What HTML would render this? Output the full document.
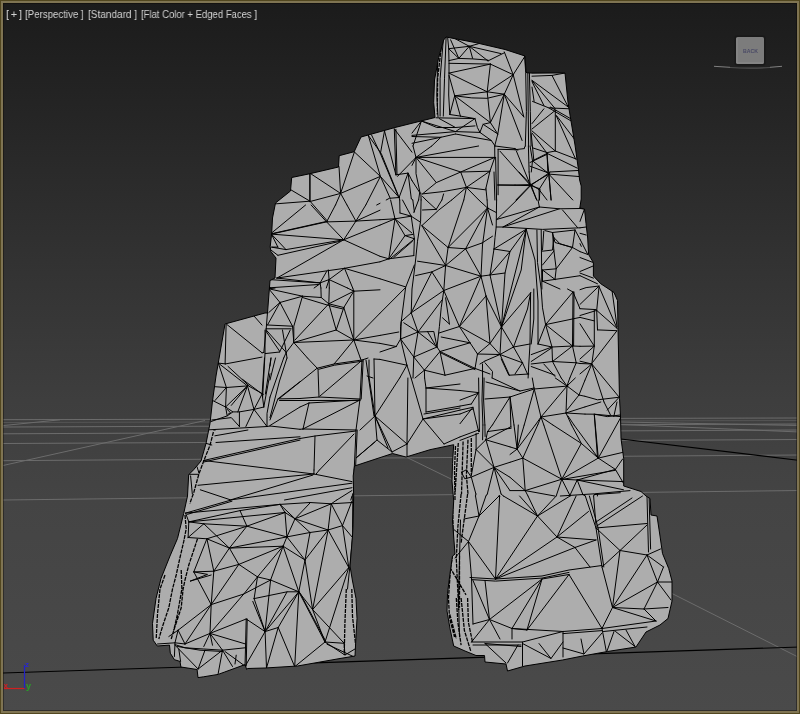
<!DOCTYPE html>
<html>
<head>
<meta charset="utf-8">
<title>Perspective viewport</title>
<style>
html,body{margin:0;padding:0;background:#444;}
body{width:800px;height:714px;overflow:hidden;position:relative;font-family:"Liberation Sans",sans-serif;}
#vp{position:absolute;left:0;top:0;width:800px;height:714px;overflow:hidden;
 background:linear-gradient(to bottom,#1b1b1b 0px,#222222 80px,#313131 250px,#3e3e3e 400px,#444444 500px,#4a4a4a 714px);}
#frame{position:absolute;left:0;top:0;width:794px;height:708px;border:1px solid #52471f;box-shadow:inset 0 0 0 2px #7f7452, inset 0 0 0 3px rgba(10,6,0,0.4);padding:2px;pointer-events:none;}
svg{position:absolute;left:0;top:0;will-change:transform;}
.lbl{position:absolute;top:7px;height:14px;line-height:14px;font-size:11px;color:#d2d2d2;white-space:nowrap;transform-origin:0 50%;will-change:transform;}
</style>
</head>
<body>
<div id="vp">
<svg width="800" height="714" viewBox="0 0 800 714">
 <g id="grid" fill="none" stroke="#6c6c6c" stroke-width="1">
  <path d="M3 419.7L800 418"/>
  <path d="M3 422.5L800 420.5" stroke="#555"/>
  <path d="M3 425.6L60 419.8"/>
  <path d="M3 427L800 424"/>
  <path d="M3 433.8L800 430"/>
  <path d="M3 443.5L800 439.5"/>
  <path d="M3 460.7L800 455"/>
  <path d="M3 500L800 490.5"/>
  <path d="M3 465.5L205 420.5"/>
  <path d="M620 422L800 425.5"/>
  <path d="M620 424.5L800 432"/>
  <path d="M406 457L452.5 479.7"/>
  <path d="M672 593.5L800 658"/>
 </g>
 <g id="axes" fill="none" stroke="#000" stroke-width="1.2">
  <path d="M3 673L800 647"/>
  <path d="M600 436.5L800 460.5"/>
 </g>
 <defs><clipPath id="rc"><path d="M446 37 475 42.5 505 49.5 525 56 526 72.5 529 73 565 73 568 102.5 570 115 575 145 578.5 170 579.6 180 581.2 186 581.2 199 579.8 208 584.5 209 586 223.6 587.7 238 588.6 254.5 593.4 262.6 593.4 276 600.7 283.7 614 292.5 617.5 300.5 618 328 619 376 619.5 398.5 620.5 416 621 438.5 623.7 458.5 623.7 486 641 491.5 646 496 650 498.5 651 515 657 516 660 536 662.5 553.5 668.7 568.5 672 581 672 601 668 618.5 660 625 646 632 636 647 607.5 651.5 582.5 656 562.5 660 525 666 507.5 671 506 664 485 662 484.5 655.5 476 655.5 465 651 453.7 646 450 628.5 447 611 447.5 593.5 450 573.5 452.5 556 455 554 452.5 521 453.7 501 452 481 452.5 463.5 453.7 444.7 430 449.7 406 457 392.5 453.5 354.5 466 353.2 476 353.7 496 353 526 352.5 536 350 566 352.5 581 356 598.5 357 618.5 356 636 355 656 340 658.5 297.5 666 265 668 247.5 668.5 246.7 669.5 245 664.6 224.7 672 218.2 674.4 203.6 676.8 198 677.6 197.1 669.5 180.9 667 180 661.4 174.4 659.7 170.3 653.2 169.5 645.1 157.3 646 153.2 640.2 152.5 623.5 156 598.5 161 578.5 170 556 177.5 538.5 183.7 513.5 187.5 496 188.7 474.7 193.7 469.7 201 461 206 443.5 210 423.5 212.5 401 216 376 220 353 225 324 265 313 267.5 313 270 280.5 275 278 276 258 271 251.7 270.2 246.8 271.7 233 272.5 218 275.5 203 290.5 191 291.7 177.5 310 173.7 338.5 167 339.2 155.7 354.2 151.7 361 137 395 127.5 425 120 435 117.5 433.7 102.5 434.5 80 438.7 57.5 443.7 40Z"/></clipPath></defs>
 <path id="rock" d="M446 37 475 42.5 505 49.5 525 56 526 72.5 529 73 565 73 568 102.5 570 115 575 145 578.5 170 579.6 180 581.2 186 581.2 199 579.8 208 584.5 209 586 223.6 587.7 238 588.6 254.5 593.4 262.6 593.4 276 600.7 283.7 614 292.5 617.5 300.5 618 328 619 376 619.5 398.5 620.5 416 621 438.5 623.7 458.5 623.7 486 641 491.5 646 496 650 498.5 651 515 657 516 660 536 662.5 553.5 668.7 568.5 672 581 672 601 668 618.5 660 625 646 632 636 647 607.5 651.5 582.5 656 562.5 660 525 666 507.5 671 506 664 485 662 484.5 655.5 476 655.5 465 651 453.7 646 450 628.5 447 611 447.5 593.5 450 573.5 452.5 556 455 554 452.5 521 453.7 501 452 481 452.5 463.5 453.7 444.7 430 449.7 406 457 392.5 453.5 354.5 466 353.2 476 353.7 496 353 526 352.5 536 350 566 352.5 581 356 598.5 357 618.5 356 636 355 656 340 658.5 297.5 666 265 668 247.5 668.5 246.7 669.5 245 664.6 224.7 672 218.2 674.4 203.6 676.8 198 677.6 197.1 669.5 180.9 667 180 661.4 174.4 659.7 170.3 653.2 169.5 645.1 157.3 646 153.2 640.2 152.5 623.5 156 598.5 161 578.5 170 556 177.5 538.5 183.7 513.5 187.5 496 188.7 474.7 193.7 469.7 201 461 206 443.5 210 423.5 212.5 401 216 376 220 353 225 324 265 313 267.5 313 270 280.5 275 278 276 258 271 251.7 270.2 246.8 271.7 233 272.5 218 275.5 203 290.5 191 291.7 177.5 310 173.7 338.5 167 339.2 155.7 354.2 151.7 361 137 395 127.5 425 120 435 117.5 433.7 102.5 434.5 80 438.7 57.5 443.7 40Z" fill="#adadad" stroke="#000" stroke-width="1" stroke-linejoin="round"/>
 <g clip-path="url(#rc)"><path id="edges" d="M360.3 358L361 360M339.1 358L334 364M318 368L334 364L362 360L368 358M319 369.2L334.4 365.2L362.4 361.2M318 369L307.5 358M318 369L319 397M320 396L360 362M300 398.5L319 397L360 399M300 400.5L360 400.4M309 403L303 429M360 400L303 429M309 403L300 407M360 400L309 403M303 429L356 430M303 429L300 429.3M300 438.5L315 436L356 431M315 436L314 470M354 434L319.4 470M356 430L354.2 470M357.2 430L355.5 470M362 360L360 399L356 430M366 360L374 416M369 360L369 377L375 416M363.2 360L361.2 399M367 376L373 378M374 359L380 359.4M374 359L375 416M399.7 378L375 416M407.9 378L407 444M424.6 378L426 388L426 412M426 388L460 384M426 388L460 390.5M426 412L460 406.1M424 414L460 408M423 419L460 410.1M411.1 378L423 419L407 444M423 419L444 444M423 419L460 414M444 444L460 436.9M375 416L407 444M375 416L392 452M375 416L377 440L392 452M375 416L360 430M375 416L388 448M407 444L407 456M407 444L392 452M377 440L356 458L375 442M213.8 430.1L215.3 430M214.9 435.8L247.9 430M216 442.5L300 436.8M203.6 460.5L300 438.5M204.3 461.9L300 440.1M314 470L313.9 474M203.6 460.5L313.9 474M316.1 474L319.4 470M313.9 474L352 481.6M198 485.3L313.9 474M200.3 489.8L230.6 499.9L312.8 475.1M230.6 499.9L352 483.2M284.5 500L352 487.7M336.8 500L352 490.5M350.8 500L352 496M532 72.9L565 72.2M532 76.2L552 75.4L565 73M532 80.3L568.3 107.1M532 80.8L555.3 108.8M532 81.7L543.9 105.5M532 87.1L534.1 101.4M552 75.4L568.3 107.1M532.5 101.4L548.8 107.9L569.9 108.8M548.8 107.9L573.9 122.6M550.4 107.1L573.1 120.1M555.3 110.4L555.3 151M555.3 110.4L532 129M543.9 108.8L532 123.6M532 130.9L555.3 151L547.1 152.6L532.5 147.8M556.1 115.3L575.6 159.1M556.9 116.1L576.1 141.3M555.3 151L576.4 159.1M547.1 153.4L577.2 168.1M547.1 153.4L532.5 160.8M547.1 153.4L547.8 172M532.5 160.8L546.6 172M532 133L547.1 153.4M530.1 146.1L532.5 160.8L531.3 172M528.4 146.1L529.1 172M515 149.7L524.4 148.6M515 148.6L517.9 150.2M525.3 146L524.4 147.8M549.9 172L578 170.5M421.1 200L420.6 221.2L417.5 241.2L415.6 260L413.8 275L412 289L411.2 312.8M395 218.8L411.2 216.2M395 218.8L388.8 258.8M395 218.8L405 235.6L414.4 238.8M395 218.8L411.9 233M411.2 216.2L420 221.9M411.2 216.2L414.4 238.8M411.2 216.2L400 213M380 219.7L395 218.8M380 225.1L395 218.8M390.6 200L395 218.8M399.7 200L400 213M402.5 200L411.2 216.2M412.8 200L414.4 211.9M418.6 200L413.8 212.5M405 235.6L388.8 258.8M405 235.6L413.1 234.4M413.8 239.4L390 258.8M412.5 241.2L393.8 257.5M414.4 238.8L413.8 255.6M388.8 258.8L413.8 255.6M380 256.3L388.8 258.8M380 261.8L388.8 258.8M380 278.8L405.6 286.9M414.4 265L405.6 287.5L400.6 326.5L400.6 339M421.9 225.6L438.8 210L451.7 200M426 200L436.2 209.4M422.5 210L436.2 209.4M441.9 200L436.2 209.4M421.9 225.6L448.1 247.5M421.9 225.6L445.6 265.5M448.1 247.5L463.8 200M448.1 247.5L465.6 248.8M448.1 247.5L487.5 208M448.1 247.5L445.6 265.5L443.8 290.5M465.6 248.8L487.5 208M465.6 248.8L482 243M465.6 248.8L445.6 265.5M465.6 248.8L481 276.2M445.6 265.5L481 276.2M445.6 265.5L417.5 261.2M445.6 265.5L431.9 271.9L415.6 275.6M431.9 271.9L411.2 312.8M431.9 271.9L443.8 290.5M481 276.2L443.8 290.5M487.5 208L482.5 245L481 276.2M443.8 290.5L441.2 307.8L439.4 326.5L437 347M380 313.2L405.6 287.5M411.2 312.8L401.2 321.5L400.6 339M411.2 312.8L418 332M411.2 312.8L443.8 290.5M418 332L442 300M418 332L403.8 322.8M418 332L400.6 339M418 332L433.8 331.5L437 347M418 332L437 347M418 332L413.8 357M427.5 331.5L436.2 346.5M400.6 339L396.2 346.5M400.6 339L413.8 357M400.6 339L406.9 365.2M396.2 346.5L380 352M380 335.4L398.8 332M380 343.4L396.2 346.5M380 359.4L406.9 365.2M437 347L440 351.5L470 342.8M459.4 326.5L443.8 290.5M459.4 326.5L481 276.2M459.4 326.5L486 296M459.4 326.5L470 342.8M459.4 326.5L490 343.5M459.4 326.5L439 333M449.4 324L445.6 297.8M449.4 324L442.5 317.8M470 342.8L441.2 337M470 342.8L477.5 354M440 351.5L475 368.4M440.6 352.8L475 369.6M440 351.5L445 375.2M440 351.5L424.4 370.2M437 347L413.8 357L424.4 370.2M413.8 357L413 378M406.9 365.2L399.7 378M406.9 365.2L411.1 378M424.4 370.2L445 375.2M424.4 370.2L424.6 378M424.4 370.2L415 378M445 375.2L475 368.4L477.5 354L490 343.5M475 368.4L490 374M496.6 200L496.2 227L495 237.5L494 249M487.5 208L478.8 200M487.5 208L496.2 212.5M487.5 208L487.1 200M487.5 208L492.5 225M482 243L492.5 236.2M516.9 200L496.9 219.4M539.4 207L496.9 219.4M539.4 207L538 200M539.4 207L559.4 208.8L503 227M559.4 208.8L580 208.5M562.5 210L577.5 227.5M539.4 207L503 227M496.2 227L503 227L542.5 229.4L580 227.8M526.2 229.2L494 249M526.2 229.2L510 251.5M526.2 229.2L501.5 327M526.2 229.2L521.2 270L501.5 327M526.2 229.2L535 260L538 301L538 344M501.5 327L490 275M494 249L510 251.5L505 273L501.5 327M494 249L490 275M510 251.5L490 275L505 273M481 276.2L490 275M536.9 230L537.5 262.5L541.2 289L542.5 307.8L545.6 324.6M541.2 230L541.9 289M543.8 231.2L542.5 250M545 230.6L552.5 232.5L555 242.5L572.5 247.5M552.5 232.5L553.8 250M552.5 232.5L575 230M542.5 251.2L552.5 250L553.8 237.5M553.8 250L556.2 268.8L542.5 270M556.2 268.8L572.5 247.5M556.2 268.8L555 279.4M542.5 270L555 279.4M542.5 270L542.5 281.2M555 279.4L542.5 281.2M555 279.4L580 275.7M572.5 247.5L580 251.6M572.5 247.5L560 243.8L553.8 237.5M575 230L580 239.2M575 230L572.5 247.5M542.5 265L553.8 251.2M542.5 281.2L560 289M501.5 327L486 296M501.5 327L490 343.5M501.5 327L500 354.5M501.5 327L513.5 347M501.5 327L530.6 292.8M486 296L481 276.2M486 296L490 343.5L500 354.5M477.5 354L500 354.5L513.5 347M500 354.5L522.5 362.8M500 354.5L485 361M500 354.5L509.4 375.2M513.5 347L527.5 309L530.6 292.8M513.5 347L530 344M513.5 347L522.5 362.8L527.5 374M522.5 362.8L515 374M530.6 292.8L530 344L528.8 364L528.1 378M533.8 289L533.8 319L531.2 344M538 344L545.6 324.6L573 292M545.6 324.6L580 317.4M545.6 324.6L572.5 346M545.6 324.6L552 347L572.5 346M538 344L552 347L552.5 361.5M552 347L531.2 354.6M531.2 361.5L551.9 347.8M531.2 364L552.5 361.5L576.2 362.8M573 292L572.5 346M574 292L573.6 346M572.5 346L552.5 361.5M572.5 346L576.2 362.8M572.5 346L580 346.3M552.5 361.5L561.2 378M543.8 364L555 376.5M531.2 366.5L555 375.2M576.2 362.8L569.8 378M576.2 362.8L580 363.5M482.5 364L482.6 378M485 362.8L492.5 371.5L492.1 378M480 364L485 361M501.2 359L508.8 375.2M509.4 375.2L528.8 374M573 292L580 308.7M573 292L567.5 289M305.6 205L272.2 232.5M311.1 205L326.6 221.9L335.5 205M355.9 221.1L347 205M355.9 221.1L365.8 205M355.9 221.1L380 210.2M326.6 221.9L355.9 221.1L380 219.7M271.4 234.1L326.6 221.9L343.7 239.8M355.9 221.1L343.7 239.8L380 225.1M271.4 234.1L343.7 239.8M271.4 234.1L286 249.6M271.4 234.1L277.9 247.1M286 249.6L343.7 239.8M277.9 255.3L339.6 241.4M271.4 247.1L286 249.6M271.4 250.4L277.9 255.3M272.2 247.1L277.9 247.1M343.7 239.8L380 256.3M343.7 239.8L277.1 278M380 261.8L344.5 268.3L277.1 278M344.5 268.3L380 278.8M328.3 269.9L329.1 279.6L329.3 288M326.6 271.5L320.1 282.9M344.5 268.3L329.1 279.6M344.5 268.3L352.7 288M329.1 279.6L347.4 288M329.1 279.6L320.1 282.9M329.1 279.6L326.3 288M320.1 282.9L320.9 288M269.8 279.6L320.1 282.9M276.3 278L320.1 282.9M269.8 287.8L270.8 288M269.8 287.8L318.5 284.5M314.1 288L320.1 283.7M269.8 287.8L269.4 288M416 157.4L478.6 146M416 157.4L431.7 146M416 157.4L413 146M416 157.4L494.8 157.4M416 157.4L460.7 172L489.9 171.2M416 157.4L436.3 182.6M416 157.4L416 173.6L420.1 193.1M416 157.4L412 161.5M494.8 157.4L460.7 172M494.8 157.4L489.9 171.2M494.7 146L494.8 157.4M495.6 157.4L496.6 200M494 172L494.9 200M422.5 193.9L436.3 182.6L460.7 172L466.4 187.4M489.9 171.2L466.4 187.4M489.9 171.2L485.9 188.3M466.4 187.4L485.9 189.9M485.9 188.3L487.1 200M422.5 193.9L443.6 191.5L466.4 187.4L478.8 200M466.4 187.4L451.7 200M466.4 187.4L463.8 200M443.6 193.9L441.9 200M422.5 196.4L426 200M420.9 193.1L421.1 200M419.6 193.1L418.6 200M498.1 149.3L515 149.7M498.1 149.3L498.1 194.8M498.1 185L515 185M495.1 146L515 148.6M412 165.4L416 157.4M411.3 198.7L412.8 200M412 180.6L420.1 193.1M519 172L530.9 184.6M529.1 172L530.1 184.6M530.9 184.6L548.8 174.1L546.6 172M548.8 174.1L549.9 172M548.8 174.1L578.8 176.5M548.8 174.1L572.8 200M548.8 174.1L551.1 200M548.8 174.1L539 189.5M530.9 184.6L539 189.5M530.9 184.6L536.7 200M539 189.5L539.3 200M539 189.5L547 200M515 185L530.9 184.6L515.9 200M580 208.5L584.5 209L580 221.4M580 227.8L586.9 226.9M580 239.2L587.8 254.5M580 243.6L581.3 246.4M580 233.3L586.1 235M580 251.6L587.8 254.5M580 257.5L593.4 262.6M580 271.5L593.4 265.9M580 273.1L593.4 278.1M580 275.7L597.5 283.8M226.1 324.9L225.1 363.9M226.4 324.1L262 352.8M225.6 363.9L262 357.1M254 316L262 325.1M218.3 363.1L225.6 363.9M218.3 363.1L247.5 385.9M228 366.4L249.1 385.9M242.6 379.4L262.1 394M218.3 363.1L226.4 387.5M215 386.7L226.4 387.5L247.5 385.9M226.4 387.5L225.6 407M215 400.5L226.4 387.5M212.6 400.5L225.6 407L247.5 385.9M231.3 405.4L247.5 385.9L254 409.4M247.5 385.9L237.8 411.9M225.6 407L232.9 411.9L227.2 415.9L225.6 407M227.2 409.4L230.4 412.7L228 414.3M232.9 411.9L239.4 411.9L254 409.4L263.8 407M239.4 411.9L239.4 426.5M254 409.4L267 426.5M254 409.4L245.9 426.5M210.9 421.6L227.2 415.9M211.8 420L231.3 417.6L239.4 426.5M209.3 429.8L239.4 428.1L267 426.5L270 426M262.1 394L254 409.4M264.5 358L262.1 394L263.8 407M270 373.7L263.8 407M270 397.1L267 413.5L267 426.5M271 358L265.4 394M287 358L279.5 381L270 417.6M283.7 358L270 397.1M300 381.7L277.9 398.9L300 398.5M279.5 400.5L300 400.5M300 407L270 425.5M270 426L300 429.3M277.9 398.9L270 419.9M275.5 358L270 380M271 358L270 366.1M580 289.7L586.1 287.6L599.1 286L580 304.4M599.1 286L596.7 310.4M599.1 286.8L617 328.3M612.1 290.9L617 326.6M580 308.7L595.9 309.6M596.7 310.4L580 315.5M596.7 310.4L597.5 329.9M594.3 310.4L594.3 346.1M580 317.4L594.3 320.9M580 323.8L594.3 346.1M597.5 329.9L617 330.7L592.6 362.4M596.7 310.4L617 328.3M580 346.3L594.3 346.1L580 359M594.3 346.1L591.8 364M580 361.2L591.8 364M580 363.5L591.8 364L580 373.9M591.8 364L585 380.1M591.8 364L604 402M591.8 364L618.6 396.5M585 396.3L597.5 399.8L618.6 397.3M460 390.5L478.6 392.6M460 406.1L471.3 404M460 400.1L477.8 393.4M460 410.1L472.9 407.3M460 414L473.2 408.9M472.9 407.3L478.6 431.6M472.9 407.3L460 423.7M460 436.9L478.6 430M460 440.4L478.6 433.3M478.6 378L479.4 431.6M482.9 425L482.6 439.8M484.9 425L485.1 436.5M478.6 392.6L471.3 404M492.4 425L487.5 431.6M485.9 439.8L510.9 426.7M485.9 439.8L510 446.9M485.9 439.8L494 467.4M485.9 439.8L476.1 449.5M485.9 439.8L487.5 431.6M510 428.4L487.5 431.6M476.1 449.5L494 467.4M476.1 449.5L476.1 433.3M476.1 449.5L471.3 475.5M494 467.4L510 462.3M494 467.4L510 477.3M494 467.4L510 490.6M494 467.4L501.1 494M494 467.4L487.3 494M494 467.4L471.3 477.1L475.9 494M461.5 472.3L466.4 469.8L471.3 477.1L464.8 478.8L461.5 472.3M585 414.1L594.3 414.2L620.3 416.6M585 406.9L600.8 402M594.3 414.2L607.3 416.6L620.3 415M604 402L610.5 415M617 402L613.8 416.6M535.3 425L517.1 449.1M537.7 425L522.8 458.1M543.8 425L561.8 479.2M552.9 425L581.3 443.4M571.5 425L581.3 443.4M574 425L598.3 458.1M581.3 443.4L561.8 479.2M581.3 443.4L598.3 458.1M594.3 414.2L598.3 458.1L620.3 418.3M598.3 458.1L622.7 452.4M598.3 458.1L615.4 469.4M598.3 458.1L561.8 479.2M615.4 469.4L622.7 458.9M615.4 469.4L623.5 483.3M615.4 469.4L577.2 480M615.4 470.3L563.4 479.2M561.8 479.2L522.8 458.1M561.8 479.2L525.2 490.6M561.8 479.2L577.2 480M561.8 479.2L569.9 495.4M561.8 479.2L556.2 496M577.2 480L569.9 495.4M577.2 480L582.9 494.6M577.2 480L623.5 489.8M577.2 480L623.5 481.6M525.2 490.6L522.8 458.1M510 490.6L525.2 490.6L554.7 496M560.3 496L569.9 495.4L594.3 493.8L630 490.6M594.3 494.6L620.3 492.7M525.2 490.6L528 496M570.1 496L569.9 495.4M582.9 494.6L585.3 496M594.3 494.6L593.6 496M597.5 494.6L597.4 496M517.1 449.1L514 425M517.1 449.1L518.3 425M517.1 449.1L524.2 425M517.1 449.1L510 446.9M517.1 449.1L510 454.5M517.1 449.1L522.8 458.1L510 462.3M510 428.4L511.4 428M510 477.3L525.2 490.6M206.1 443.4L211.8 445M189 474.3L198.8 474.3M197.1 466.9L198.8 472.6M190.6 475.9L192.3 493.8M354.2 470L354 500M352.6 493.8L352.8 500M185.6 513.1L231.2 500M187.5 514.3L232 501.2M185.6 513.1L280 504.4M188.8 521.9L240 510.6L280 504.4M188.8 521.9L285 512.5M185.6 513.1L188.8 521.9L188.1 537.5M203.8 523.8L188.8 521.9M203.8 523.8L188.1 537.5M203.8 523.8L246.9 526.2M203.8 523.8L229.4 548.1M240 510.6L246.9 526.2L229.4 548.1M246.9 526.2L285 512.5M246.9 526.2L286.9 536.9M246.9 526.2L206.9 538.8M188.1 537.5L206.9 538.8L229.4 548.1M206.9 538.8L213.8 571.2M206.9 538.8L193.8 571.9M229.4 548.1L213.8 571.2M229.4 548.1L238.8 564.4M229.4 548.1L286.9 536.9M229.4 548.1L283.1 546.2M213.8 571.2L238.8 564.4M213.8 571.2L193.8 571.9M213.8 571.2L211.2 604.6M238.8 564.4L283.1 546.2M238.8 564.4L257.5 576.9M238.8 564.4L211.2 604.6M257.5 576.9L283.1 546.2M257.5 576.9L243.8 594M257.5 576.9L254.1 598.6M193.8 571.9L211.2 604.6M193.8 571.9L207.5 574.4L190 581.2L211.2 575M280 504.4L310 502.5L331.2 503.8L336.8 500M280 504.4L285 512.5M280 504.4L295 518.8M285 512.5L295 518.8M285 512.5L286.9 536.9M295 518.8L331.2 503.8M295 518.8L310 503M295 518.8L328.1 530M295 518.8L286.9 536.9M295 518.8L310 532.5M331.2 503.8L328.1 530M331.2 503.8L342.5 525.6M331.2 503.8L352.5 502.5M342.5 525.6L328.1 530M342.5 525.6L351.9 501.2M342.5 525.6L352.5 537.5M342.5 525.6L348.8 567.5M328.1 530L310 532.5M328.1 530L305 560M328.1 530L348.8 567.5M328.1 530L312.6 609.6M310 532.5L286.9 536.9M310 532.5L305 560M286.9 536.9L283.1 546.2M286.9 536.9L305 560M283.1 546.2L270.6 580M283.1 546.2L305 560M283.1 546.2L298.8 591.8M305 560L298.8 591.8M305 560L312.6 609.6M270.6 580L298.8 591.8M270.6 580L265.1 631.6M270.6 580L257.5 576.9M348.8 567.5L312.6 609.6M348.8 567.5L325 642M352.8 500L352.5 537.5L350 565L347.5 589M354 500L353.6 537.5L351 565M211.2 604.6L210 633.4M211.2 604.6L178.1 630.2M211.2 604.6L185 644M211.2 604.6L243.8 594L270.6 580M243.8 594L210 633.4L246.2 619M210 633.4L245.6 644M210 633.4L185 644M210 633.4L203.8 646.5M210 633.4L212.5 645.2M210 633.4L222.5 650.2M178.1 630.2L185 644M178.1 630.2L175 642.8M178.1 630.2L168.8 636.5M175 642.8L185 644M157.5 644L175 642.8L174.4 656.5M175 644.6L185 647.8L203.8 649L222.5 650.2L245 647.8M177.5 646.5L200 650.2L222.5 651.5M175 645.2L198.1 669M178.8 649L180.6 661.5M205 650.2L198.1 669M222.5 650.2L198.1 669M222.5 650.2L218.1 674M222.5 650.2L232.5 666.5M236.2 655.2L235 664M225 651.5L243.8 665.2M246.2 619L245.6 644L245 666.5M247.2 619L246.2 666M265.1 631.6L246.2 619M265.1 631.6L245 666.5M254.1 598.6L287.1 591.8L298.8 591.8M254.1 598.6L265.1 631.6M252.8 601.4L265.1 631.6M298.8 591.8L278.2 627.5M298.8 591.8L265.1 631.6M287.1 591.8L265.1 631.6M298.8 591.8L294.7 666.7M298.8 591.8L312.6 609.6M298.8 591.8L325 642M300 593L325.6 641M312.6 609.6L325 642M312.6 609.6L344.2 643.3M325 642L344.2 643.3M325 642L294.7 666.7M325 642L344.9 655M344.2 643.3L344.9 655L356.6 648M278.2 627.5L265.1 631.6M278.2 627.5L294.7 666.7M278.2 627.5L266.5 668M265.1 631.6L266.5 668M327 644.2L356 657.8M485 399L510 397L534 389L568 386M486 382L520 391L534 388M492.1 378L520 391M482.6 378L482 400L482.9 425M484.1 378L483.6 400L484.9 425M510 397L514 425M510 397L492.4 425M510 397L510.9 426.7M534 388L541 417M532.3 378L534 388M534 390L524.2 425M541 417L567 386M541 417L566 413M541 417L535.3 425M541 417L552.9 425M541 417L537.7 425M541 417L543.8 425M567 386L561.2 378M567 386L569.8 378M567 386L579 395M567 386L566 413M567 386L575.3 378M567 386L555.3 378M579 395L585 380.1M579 395L585 396.3M579 395L567 410M566 413L585 406.9M566 413L585 414.1M566 413L571.5 425M568 416L574 425M499.3 495.6L499.6 496M499.3 495.6L499 496M501.1 494L503.4 496M475.9 494L475.5 496M487.3 494L485.9 496M309.8 173.1L309.8 201.6M309.8 173.1L340.6 193.4M309.8 201.6L340.6 193.4M339 166.6L340.6 193.4M354.4 152L340.6 193.4M354.4 152L380.4 176.4M340.6 193.4L380.4 176.4M368.3 135.4L380.4 176.4M368.3 135.4L381.3 153.6L399.1 197.5M371.5 134.9L380.4 153.6L397.5 194.3M384.5 130.9L380.4 153.6M384.5 130.9L395.9 174.8M394.3 128.9L395.1 152L395.9 174.8M395.9 129.3L397 174.8M394.3 128.9L412 152.2M412 161.5L397.5 176.4M380.4 176.4L399.1 197.5M380.4 176.4L365.8 205M340.6 193.4L335.5 205M340.6 193.4L347 205M395.9 174.8L408.1 173.1L399.1 197.5M408.1 173.1L412 180.6M408.1 173.1L411.3 198.7M399.1 197.5L389.4 198.3L386.2 200M380 203.3L376.7 205M399.1 197.5L399.7 200M380.4 176.4L390.2 198.3M443.3 39.8L440.1 78.8L440.1 116.1M446.1 37.3L444.5 78.8L443.3 116.1M447.7 37.8L448.7 48.7L449 62.5L449 73.1L448.7 95L449.8 114.5M437.6 62.5L436.8 95L438 116.9M448.7 48.7L469.3 46.3M450.6 39.8L458.8 58.4L469.3 46.3M455.5 38.9L469.3 46.3M448.7 48.7L458.8 58.4M469.3 46.3L472.6 58.4M469.3 46.3L488 60.9M469.3 46.3L501 53.6M478.3 43.8L469.3 46.3M449 60.6L458.8 58.4L472.6 58.9L488 60.1M449 63.3L490.4 64.1M488 60.9L504.3 52.8M504.3 51.9L513.2 74.7M524.6 56.8L513.2 74.7M490.4 64.1L513.2 74.7M490.4 64.1L487.2 91.8M449 73.1L490.4 64.1M449 73.1L487.2 91.8L513.2 74.7L504.3 94.2M513.2 74.7L523.8 116.9M487.2 91.8L504.3 94.2M454.7 95.8L487.2 91.8M454.7 95.8L471.8 97.9L487.2 98.3L504.3 94.2M487.2 91.8L490.4 122.6M504.3 94.2L490.4 122.6M504.3 94.2L523.8 116.9M504.3 94.2L522.1 140.5M454.7 95.8L490.4 122.6M454.7 95.8L460.4 116.1M449 75.5L454.7 95.8L449.8 114.5M490.4 122.6L497.8 134M504.3 94.2L497.8 134M524.6 56L525.7 72.3L526.4 111.3L525.3 146M529.4 72.6L530.3 111.3L531.1 146M527.8 72.6L528.6 146M436 117.8L475 118.6L477.4 127.5L479.9 132.4M421.4 121L412 133.1M421.4 121L413 146M421.4 121L455.5 131.6M421.4 121L436.8 127.5L455.5 127.5M412 135.4L455.5 131.6L475 118.6M455.5 131.6L479.9 132.4M439.3 118.6L455.5 127.5L475 125.9M455.5 134L491.3 140.5M412 136.5L440.9 137.3L455.5 134M440.9 137.3L431.7 146M483.1 124.3L497.8 134L494.7 146M479.9 132.4L483.1 124.3L490.4 122.6M460.4 116.1L475 118.6M449.8 114.5L460.4 116.1M479.9 132.4L491.3 140.5L495.1 146M412 143.3L440.9 137.3M537.5 516L519.6 496M499 496L479 516L468.5 541.5M499.6 496L495.5 579M503.4 496L537.5 516M475.5 496L479 516M485.9 496L479 516L464 519M528 496L537.5 516L556.2 496M537.5 516L557 537M537.5 516L495.5 579M537.5 516L570.1 496M557 537L576.1 496M557 537L588.5 511.5M557 537L495.5 579M557 537L575 547.5M557 537L596 540M575 547.5L596 540M575 547.5L495.5 579M575 547.5L590 567M470 577.5L495.5 579L542 576L569 570L602 565.5M471.5 579.6L495.5 581.1L542 578.1L569 572.4M468.5 541.5L495.5 579M468.5 541.5L471.5 577.5M468.5 541.5L452 528M468.5 541.5L455 558M471.5 577.5L473 624M473 580.5L489.5 619.5M485 580.5L489.5 619.5M542 579L489.5 619.5M542 579L512 628.5M542 579L527 630M569 574.5L527 630M569 574.5L602 628.5M569 574.5L542 579M489.5 619.5L473 624M489.5 619.5L512 628.5M489.5 619.5L471.5 642M489.5 619.5L500 639M512 628.5L527 630M512 628.5L512 639M512 628.5L563 631.5L602 628.5M471.5 642L522.5 642L563 631.5M473 645L521 645M563 633.6L602 630.6M522.5 642L522.5 666M563 631.5L563 657M485 643.5L506 663M485 643.5L521 646.5M507.5 663L518 645M522.5 643.5L551 658.5L563 642M563 648L584 654L581 639M584 654L602 633M539 643.5L551 658.5M585.3 496L596 528L602 567L612.5 607.5M593.6 496L596 525M589.4 496L598.1 528L603.8 567M596 528L647 523.5M596 522L632 498M596 526.5L642.5 496M647 496L648.5 552M649.1 498L650.6 549M596 528L620 550.5L647 525M620 550.5L647 555M620 550.5L612.5 607.5M620 550.5L602 567M647 555L612.5 607.5M647 555L657.5 582M647 555L663.5 567M647 555L660.5 549M657.5 582L612.5 607.5M657.5 582L644 609M657.5 582L663.5 567M657.5 582L672.5 582M657.5 582L671 600M612.5 607.5L644 609L668 607.5M612.5 607.5L656 621M612.5 607.5L602 628.5M644 609L656 621M602 628.5L656 621M603.5 631.5L647 627M602 628.5L606.5 652.5M614 631.5L606.5 652.5M615.5 631.5L635 646.5M626 630L635 646.5M500 151.2L530.6 185.6M516.2 150.6L530.6 185.6M497.5 185L530.6 185.6L516.9 200M530.6 185.6L536.7 200M530.6 185.6L548.8 173.1M530.6 185.6L540 188.8L539.3 200M531.2 133.8L533.8 160M546.9 154.4L530 162.5M546.9 154.4L548.8 173.1M530 166.2L548.8 173.1L551.1 200M618.6 397.9L607.3 410.1M594.3 415L597.5 457.3M276.2 203.8L310 201.2M291.2 190L310 201.2M310 173.8L310 201.2L327.5 221.2M271.2 233.8L327.5 221.2M460.5 520L459.5 559L458.5 598L459.5 637M265 330.1L265 353.6L279.6 352M265.8 330.9L279.6 351.2M290.2 330.1L279.6 352M317 368.3L279.6 398.3M265 353.6L262.6 397.5M248.8 386.1L263.4 394.3M269.4 288L268.8 288.8L275.1 288M268.8 288.8L302.5 296.2M329.3 288L328.8 303.8M320.9 288L321.2 297.5M347.4 288L353.8 291.2M352.7 288L353.8 291.2L380 289.8M353.8 291.2L353.8 340M353.8 291.2L343.8 307.5M353.8 291.2L328.8 303.8M302.5 296.2L321.2 297.5L328.8 303.8L343.8 307.5M302.5 297.5L328.8 305.5L343 309M302.5 296.2L280 302.5M302.5 296.2L293.8 326.2L293.8 342.5M280 302.5L268.8 288.8M280 302.5L267.5 325M280 302.5L292.5 326.2M280 302.5L268.8 312.5M328.8 303.8L295 340M328.8 303.8L336.2 330M343.8 307.5L336.2 330M343.8 307.5L353.8 340M336.2 330L353.8 340M336.2 330L293.8 342.5M353.8 340L293.8 342.5M353.8 340L380 335.4M353.8 340L380 313.2M353.8 340L380 343.4M267.5 325L292.5 326.2M266.2 328.8L291.2 328.8M292.5 326.2L293.8 342.5M266.2 328.8L263.8 352.5M266.2 330L286.2 352.5M293.8 342.5L286.2 352.5M282.5 330L286.2 352.5M262 352.8L263.8 352.5M267.5 312.5L266.2 328.8M353.8 340L360.3 358M353.8 340L339.1 358M293.8 342.5L307.5 358M286.2 352.5L287 358M286.2 352.5L283.7 358" fill="none" stroke="#000" stroke-width="1" stroke-linejoin="round" stroke-linecap="round"/><path id="slivers" d="M458.3 443L455 494M463.1 441.4L461.5 494M468 439.8L466.4 475.5L468 494M471.3 438.1L471.3 475.5M213.4 432L210.1 445L203.6 461.3L198.8 474.3L193.9 492.1L189.8 503.5M461.1 494L457.9 526.5L456.3 559L458.7 610M467.6 494L461.1 542.8M459.5 555.8L459.5 607.8M449.8 567.1L466 594.8M456.3 598L457.9 622.4L461.1 645.1M461.1 598L464.4 630.5L470.9 651.6M467.6 598L468.4 622.4L472.5 641.9M449.8 614.3L456.3 638.6M441.7 43L437.6 78.8L437.3 114.5M452.5 500L453.5 549L450.5 569L448.5 598L449.5 618L454.5 637M455.5 446L454.5 470L455 500M185 515L186.2 528.8L183.8 541.2L180 557.5L176.2 575L172.5 589L168.8 607.8L162.5 626.5L158.8 639M197.5 538.8L193.8 550L188.8 565L185 580L183.1 589L181.2 607.8L175 626.5L171.2 639M181.2 570L181.9 589L177.5 614L173.8 630.2M165 575L160 589L157.5 614L156.2 639M346.3 589L344.9 623.4L344.2 655M351.8 589L352.5 616.5L356 648" fill="none" stroke="#000" stroke-width="1.3" stroke-dasharray="4 1"/></g>
 <g id="cube">
  <rect x="734.5" y="35.5" width="31" height="30" rx="2" fill="#141414" opacity="0.55"/>
  <rect x="736" y="37" width="28" height="27" rx="1.5" fill="#7c7c7c"/>
  <path d="M737 38V63H763" fill="none" stroke="#8c8c8c" stroke-width="1"/>
  <text x="750.5" y="53" font-family="Liberation Sans, sans-serif" font-size="6" fill="#4a4a66" text-anchor="middle" font-weight="bold" textLength="15" lengthAdjust="spacingAndGlyphs">BACK</text>
  <path d="M714 66.3Q722 66.8 730 67.3" fill="none" stroke="#808080" stroke-width="1"/>
  <path d="M730 67.5Q750 68.6 770 67.5" fill="none" stroke="#505050" stroke-width="1.2"/>
  <path d="M770 67.3Q776 66.8 782 66.3" fill="none" stroke="#808080" stroke-width="1"/>
 </g>
 <g id="gizmo" fill="none" stroke-width="1.2">
  <path d="M24.5 665V688.5" stroke="#2222c8"/>
  <path d="M4 688.5H24.5" stroke="#d02020"/>
  <text x="25" y="667" font-family="Liberation Sans, sans-serif" font-size="8" font-weight="bold" fill="#2828d0" stroke="none">z</text>
  <text x="3.5" y="688" font-family="Liberation Sans, sans-serif" font-size="8" font-weight="bold" fill="#d02020" stroke="none">x</text>
  <text x="26" y="689" font-family="Liberation Sans, sans-serif" font-size="9" font-weight="bold" fill="#28a028" stroke="none">y</text>
 </g>
</svg>
<div class="lbl" style="left:6px;letter-spacing:1.7px">[+]</div>
<div class="lbl" style="left:25px;transform:scaleX(0.88)">[Perspective ]</div>
<div class="lbl" style="left:88.3px;transform:scaleX(0.912)">[Standard ]</div>
<div class="lbl" style="left:141px;transform:scaleX(0.864)">[Flat Color + Edged Faces ]</div>
<div id="frame"></div>
</div>
</body>
</html>
